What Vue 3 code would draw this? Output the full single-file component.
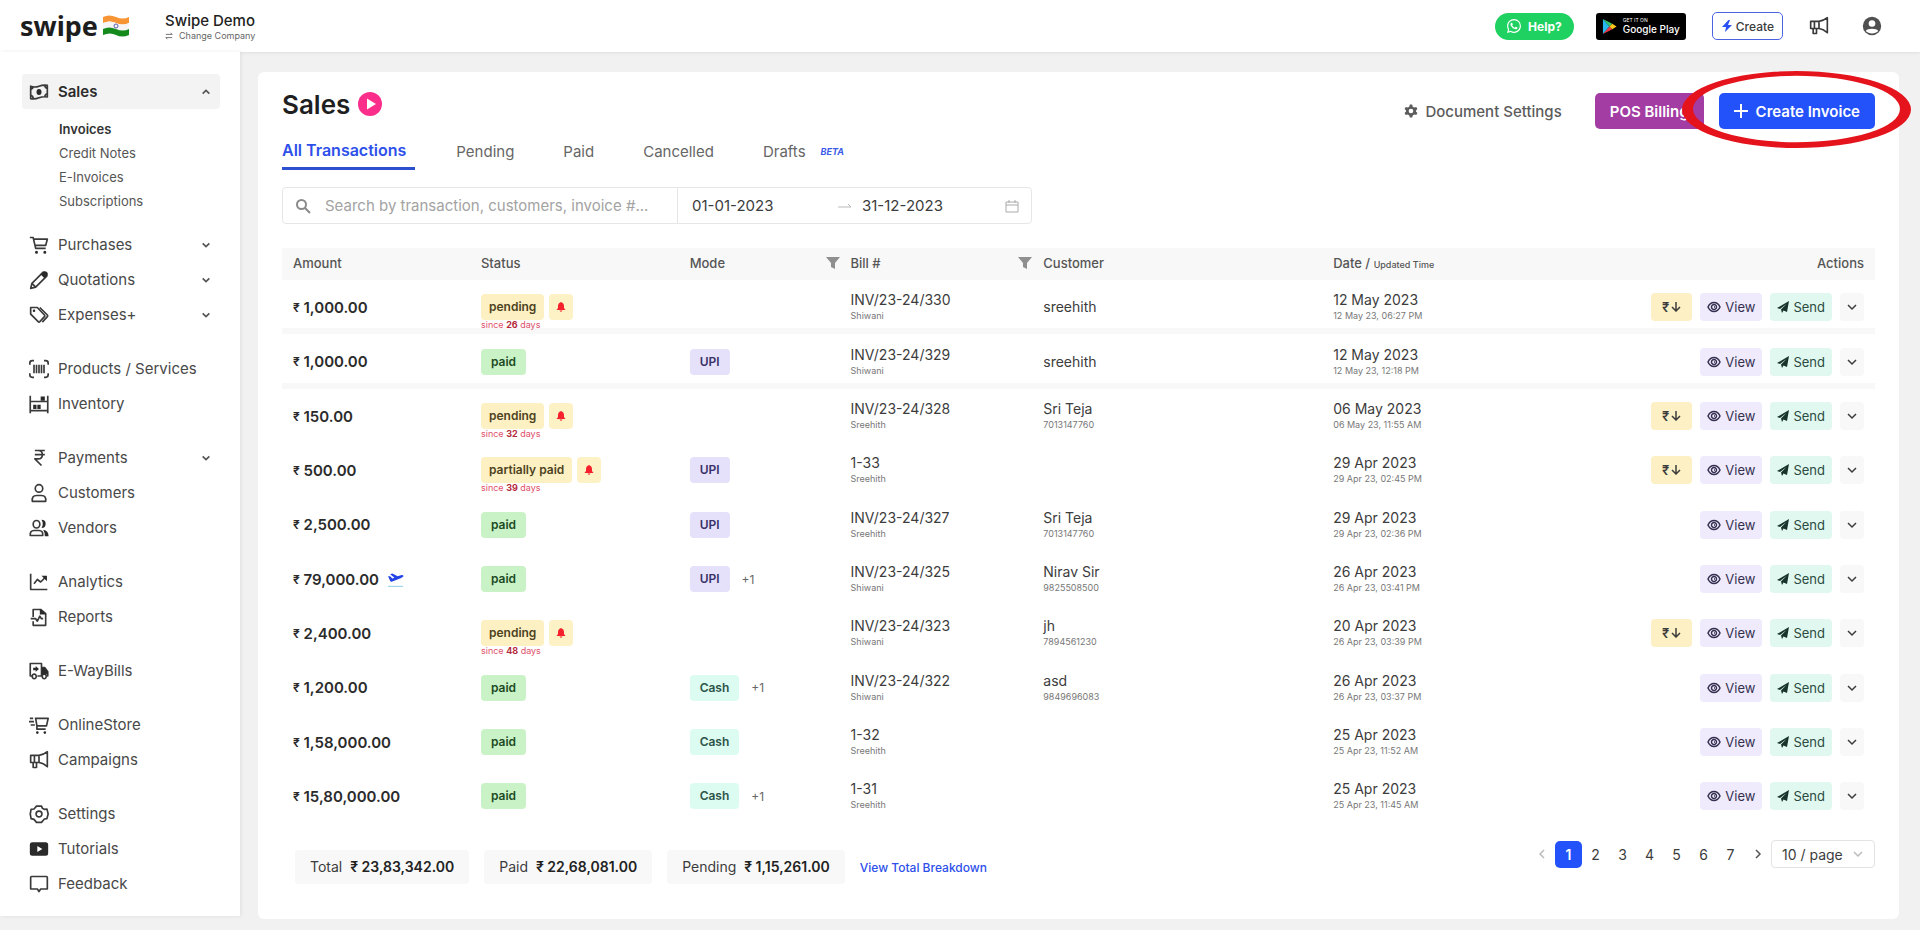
<template>
  <div class="page">
    <header class="topbar">
      <a href="#" class="brand">
        <span class="brand-name">swipe</span>
        <svg class="flag" viewBox="0 0 28 22">
          <path d="M1 2Q7 -1 14 2T27 2V8Q20 11 14 8T1 8Z" fill="#f79433" />
          <path d="M1 8Q7 5 14 8T27 8V14Q20 17 14 14T1 14Z" fill="#f6f4f4" />
          <path d="M1 14Q7 11 14 14T27 14V20Q20 23 14 20T1 20Z" fill="#148a1c" />
          <circle cx="14" cy="11" r="2" fill="none" stroke="#5b5fa8" />
        </svg>
      </a>
      <div class="company">
        <span class="company-name">Swipe Demo</span>
        <a href="#" class="company-change">
          <svg class="swap" viewBox="0 0 10 10">
            <path d="M1 3H9L7 1M9 7H1L3 9" />
          </svg>
          Change Company
        </a>
      </div>
      <div class="top-actions">
        <button class="help">
          <svg class="i14" viewBox="0 0 16 16" fill="#fff">
            <path
              d="M13.6 2.3A7.85 7.85 0 0 0 8 0C3.6 0 .06 3.56.06 7.93c0 1.4.37 2.76 1.06 3.96L0 16l4.2-1.1a7.9 7.9 0 0 0 3.8.96c4.37 0 7.93-3.56 7.93-7.93a7.9 7.9 0 0 0-2.33-5.6zM8 14.5a6.6 6.6 0 0 1-3.36-.92l-.24-.14-2.5.65.67-2.43-.16-.25a6.56 6.56 0 0 1-1-3.5A6.6 6.6 0 0 1 8 1.35a6.6 6.6 0 0 1 6.6 6.6A6.6 6.6 0 0 1 8 14.5z"
            />
            <path
              d="M11.6 9.6c-.2-.1-1.2-.6-1.35-.65-.18-.07-.32-.1-.45.1-.13.2-.5.64-.62.77-.11.14-.23.15-.43.05-1.2-.58-1.97-1.05-2.74-2.37-.2-.35.2-.32.6-1.08.06-.13.03-.25-.02-.35l-.6-1.46c-.17-.38-.33-.33-.46-.33l-.38-.01a.73.73 0 0 0-.53.25c-.18.2-.7.68-.7 1.65s.71 1.9.81 2.04c.1.13 1.4 2.13 3.38 2.99 1.26.54 1.75.58 2.37.5.38-.06 1.17-.48 1.34-.94.16-.47.16-.87.11-.95-.05-.1-.18-.14-.38-.24z"
            />
          </svg>
          Help?
        </button>
        <a href="#" class="play">
          <svg class="play-logo" viewBox="0 0 16 18">
            <path d="M1 1V17L8 9Z" fill="#27b8f0" />
            <path d="M1 1L11 6L8 9Z" fill="#35c26b" />
            <path d="M1 17L11 12L8 9Z" fill="#ee3b48" />
            <path d="M11 6L15.500 9L11 12L8 9Z" fill="#fbc51b" />
          </svg>
          <span class="play-text">
            <small>GET IT ON</small>
            <b>Google Play</b>
          </span>
        </a>
        <button class="quick">
          <svg class="i12" viewBox="0 0 12 12" fill="#2a50f4">
            <path d="M7.500 0L1 7H5L4 12L11 5H7L9 0Z" />
          </svg>
          Create
        </button>
        <button class="plain" aria-label="Announcements">
          <svg class="nav-icon line" viewBox="0 0 24 24">
            <path :d="icons.horn.line" />
          </svg>
        </button>
        <button class="plain" aria-label="Account">
          <svg class="nav-icon" viewBox="0 0 24 24">
            <circle cx="12" cy="12" r="11" fill="#505050" />
            <circle cx="12" cy="9" r="4" fill="#fff" />
            <path d="M4.500 18C6 14.500 18 14.500 19.500 18C16 22 8 22 4.500 18Z" fill="#fff" />
          </svg>
        </button>
      </div>
    </header>

    <div class="body">
      <nav class="sidebar">
        <div v-for="(group, g) in menu" :key="g" class="group">
          <template v-for="item in group" :key="item.label">
            <a href="#" class="item" :class="{ open: item.children }">
              <svg class="nav-icon line" viewBox="0 0 24 24">
                <path v-if="icons[item.icon].line" :d="icons[item.icon].line" />
                <path
                  v-if="icons[item.icon].solid"
                  class="solid"
                  fill-rule="evenodd"
                  :d="icons[item.icon].solid"
                />
              </svg>
              <span class="item-label">{{ item.label }}</span>
              <svg v-if="item.more" class="caret" viewBox="0 0 12 12">
                <path :d="item.children ? 'M2 8L6 4L10 8' : 'M2 4L6 8L10 4'" />
              </svg>
            </a>
            <ul v-if="item.children" class="sub">
              <li v-for="(child, c) in item.children" :key="child">
                <a href="#" :class="{ current: c === 0 }">{{ child }}</a>
              </li>
            </ul>
          </template>
        </div>
      </nav>

      <main class="card">
        <div class="head">
          <div class="title">
            <h1>Sales</h1>
            <button class="plain" aria-label="Watch video">
              <svg class="video" viewBox="0 0 24 24">
                <circle cx="12" cy="12" r="12" fill="#fb2f8b" />
                <path d="M9 6.500L18 12L9 17.500Z" fill="#fff" />
              </svg>
            </button>
          </div>
          <div class="head-actions">
            <a href="#" class="doc-settings">
              <svg class="i14" viewBox="0 0 24 24" fill="#5c5c5c">
                <path fill-rule="evenodd" :d="gear" />
              </svg>
              Document Settings
            </a>
            <button class="btn pos">POS Billing</button>
            <div class="create-wrap">
              <button class="btn create">
                <svg class="i14" viewBox="0 0 14 14">
                  <path d="M7 0V14M0 7H14" stroke="#fff" stroke-width="2" />
                </svg>
                Create Invoice
              </button>
              <svg class="ring" viewBox="0 0 229 77">
                <path
                  fill-rule="evenodd"
                  d="M0 38.500A114.500 38.500 0 1 1 229 38.500A114.500 38.500 0 1 1 0 38.500ZM11 38A103 33 0 1 0 218 38A103 33 0 1 0 11 38Z"
                />
              </svg>
            </div>
          </div>
        </div>

        <div class="tabs">
          <a href="#" class="tab active">All Transactions</a>
          <a href="#" class="tab">Pending</a>
          <a href="#" class="tab">Paid</a>
          <a href="#" class="tab">Cancelled</a>
          <a href="#" class="tab">Drafts <em>BETA</em></a>
        </div>

        <div class="filters">
          <label class="search">
            <svg class="search-icon" viewBox="0 0 16 16">
              <path d="M11 6.500A4.500 4.500 0 1 1 2 6.500A4.500 4.500 0 1 1 11 6.500M10 10L15 15" />
            </svg>
            <input
              type="text"
              aria-label="Search"
              placeholder="Search by transaction, customers, invoice #..."
            />
          </label>
          <div class="range">
            <input type="text" aria-label="Start date" v-model="from" />
            <svg class="arrow" viewBox="0 0 14 8">
              <path d="M0 5H13L10 2" />
            </svg>
            <input type="text" aria-label="End date" v-model="to" />
            <svg class="calendar" viewBox="0 0 14 14">
              <path d="M1 3H13V13H1ZM1 6H13M4 1V4M10 1V4" />
            </svg>
          </div>
        </div>

        <table>
          <thead>
            <tr>
              <th class="c-amount">Amount</th>
              <th class="c-status">Status</th>
              <th class="c-mode">
                <div class="filterable">
                  Mode
                  <svg class="i14" viewBox="0 0 14 12"><path d="M0 0H14L9 6V12L5 10V6Z" /></svg>
                </div>
              </th>
              <th class="c-bill">
                <div class="filterable">
                  Bill #
                  <svg class="i14" viewBox="0 0 14 12"><path d="M0 0H14L9 6V12L5 10V6Z" /></svg>
                </div>
              </th>
              <th class="c-customer">Customer</th>
              <th class="c-date">Date / <small>Updated Time</small></th>
              <th class="c-actions">Actions</th>
            </tr>
          </thead>
          <tbody>
            <tr v-for="row in rows" :key="row.bill">
              <td class="amount">
                <span class="rupee">₹</span> {{ row.amount }}
                <svg v-if="row.export" class="plane" viewBox="0 0 16 14">
                  <path d="M1 3L3 3L5 5L7 4.500L3 1L5 .5L10 3L13 2Q15.500 1.500 15.500 3Q15 4 11 5.500L5 8Q3.500 8.500 3 7.500Z" fill="#2443e6" />
                  <path d="M1 12.500H15" stroke="#8fd0ea" />
                </svg>
              </td>
              <td>
                <div class="status" :class="{ due: row.since }">
                  <div class="badges">
                    <span class="badge" :class="row.since ? 'pending' : 'paid'">{{
                      row.status
                    }}</span>
                    <button v-if="row.since" class="bell" aria-label="Send reminder">
                      <svg class="i10" viewBox="0 0 10 10" fill="#f5222d">
                        <path d="M5 0Q8 1 8 4V6L9.500 8H.5L2 6V4Q2 1 5 0ZM3.500 8.500H6.500Q5 11 3.500 8.500Z" />
                      </svg>
                    </button>
                  </div>
                  <span v-if="row.since" class="since"
                    >since <b>{{ row.since }}</b> days</span
                  >
                </div>
              </td>
              <td>
                <div v-if="row.mode" class="mode">
                  <span class="badge" :class="row.mode.toLowerCase()">{{ row.mode }}</span>
                  <span v-if="row.extra" class="extra">+1</span>
                </div>
              </td>
              <td>
                <div class="main-text">{{ row.bill }}</div>
                <div class="sub-text">{{ row.by }}</div>
              </td>
              <td>
                <div class="main-text">{{ row.customer }}</div>
                <div v-if="row.phone" class="sub-text">{{ row.phone }}</div>
              </td>
              <td>
                <div class="main-text">{{ row.date }}</div>
                <div class="sub-text">{{ row.updated }}</div>
              </td>
              <td>
                <div class="actions">
                  <button v-if="row.since" class="act record" aria-label="Record payment">
                    ₹
                    <svg class="i10" viewBox="0 0 10 10">
                      <path d="M5 0V9M1 5L5 9L9 5" />
                    </svg>
                  </button>
                  <button class="act view">
                    <svg class="i14" viewBox="0 0 14 14">
                      <path d="M1 7Q3 2.500 7 2.500T13 7Q11 11.500 7 11.500T1 7ZM9.500 7A2.500 2.500 0 1 1 4.500 7A2.500 2.500 0 1 1 9.500 7M7 7H8" />
                    </svg>
                    View
                  </button>
                  <button class="act send">
                    <svg class="i12" viewBox="0 0 12 12" fill="#17332b">
                      <path d="M12 0L10 11L6.500 9.500L5 12L4 8.500L9.500 3L3 8L0 7Z" />
                    </svg>
                    Send
                  </button>
                  <button class="act more" aria-label="More actions">
                    <svg class="i10" viewBox="0 0 10 10">
                      <path d="M1 3L5 7L9 3" />
                    </svg>
                  </button>
                </div>
              </td>
            </tr>
          </tbody>
        </table>

        <footer class="foot">
          <div class="totals">
            <div v-for="t in totals" :key="t.label" class="total">
              {{ t.label }} <b>₹ {{ t.value }}</b>
            </div>
            <a href="#" class="breakdown">View Total Breakdown</a>
          </div>
          <div class="pager">
            <button class="step" aria-label="Previous page" disabled>
              <svg class="i10" viewBox="0 0 10 10"><path d="M7 1L3 5L7 9" /></svg>
            </button>
            <button
              v-for="n in 7"
              :key="n"
              class="num"
              :class="{ on: n === page }"
              @click="page = n"
            >
              {{ n }}
            </button>
            <button class="step" aria-label="Next page">
              <svg class="i10" viewBox="0 0 10 10"><path d="M3 1L7 5L3 9" /></svg>
            </button>
            <div class="size">
              <select aria-label="Page size">
                <option>10 / page</option>
                <option>20 / page</option>
                <option>50 / page</option>
              </select>
              <svg class="i10" viewBox="0 0 10 10"><path d="M1 3L5 7L9 3" /></svg>
            </div>
          </div>
        </footer>
      </main>
    </div>
  </div>
</template>

<script setup>
import { ref } from "vue";

const from = ref("01-01-2023");
const to = ref("31-12-2023");
const page = ref(1);

const gear =
  "M10 1H14L15 4.500L17.500 6L21 5L23 8.500L20.500 11V13L23 15.500L21 19L17.500 18L15 19.500L14 23H10L9 19.500L6.500 18L3 19L1 15.500L3.500 13V11L1 8.500L3 5L6.500 6L9 4.500ZM12 8A4 4 0 1 0 12 16A4 4 0 1 0 12 8Z";

const icons = {
  money: {
    line: "M2 5Q7 7 12 5T22 4V18Q17 17 12 19T2 20ZM2 9Q5 8 5 5.500M22 8Q19 7 19 4M2 16Q5 17 5 19.500M22 14Q19 15 19 17.500",
    solid: "M12 8.500A3 3.500 0 1 0 12 15.500A3 3.500 0 1 0 12 8.500Z",
  },
  cart: {
    line: "M1 3H5L8 16H20M5.500 5H22L20 12.500H7",
    solid: "M9 19A1.800 1.800 0 1 0 9 22.600A1.800 1.800 0 1 0 9 19ZM19 19A1.800 1.800 0 1 0 19 22.600A1.800 1.800 0 1 0 19 19Z",
  },
  pencil: {
    line: "M2 22L3.500 16L17 2.500L21.500 7L8 20.500ZM3.500 16L8 20.500",
    solid: "M14 5.500L18 1.500Q20 1 21.500 2.500T22.500 6L18.500 10Z",
  },
  tags: {
    line: "M2 3H10L18.500 12Q19.500 13 18.500 14L13 20Q12 21 11 20L2 11ZM13 3L22 12Q23 13 22 14L16 20.500",
    solid: "M6 5.500A1.500 1.500 0 1 0 6 8.500A1.500 1.500 0 1 0 6 5.500Z",
  },
  barcode: {
    line: "M6 2H4Q1 2 1 5V7M18 2H20Q23 2 23 5V7M6 22H4Q1 22 1 19V17M18 22H20Q23 22 23 19V17M6 7V17M9 7V17M12 7V17M15 7V17M18 7V17",
  },
  shelf: {
    line: "M1.500 2V23M22.500 2V23M1.500 9H22.500M1.500 20H22.500",
    solid: "M14 3H19V8H14ZM5 13H9V18H5ZM10 13H14V18H10Z",
  },
  rupee: {
    line: "M7 3H19M7 8H19M7 3H11Q16 3 16 8T11 13H7L15 21",
  },
  user: {
    line: "M12 2A4.500 4.500 0 1 0 12 11A4.500 4.500 0 1 0 12 2ZM4 22Q3 15 9 15H15Q21 15 20 22Z",
  },
  users: {
    line: "M9 3A4 4.500 0 1 0 9 12A4 4.500 0 1 0 9 3ZM1.500 21Q1 15 6 15H12Q17 15 16.500 21Z",
    solid: "M15 2Q20 2 20 7T15 12Q18 7 15 2ZM17 14Q23.500 15 23.500 22H19Q19 17 17 14Z",
  },
  chart: {
    line: "M2 2V21H22M6 14L10 9L14 12L20 6",
    solid: "M15 4.500H21.500V11Z",
  },
  report: {
    line: "M5 12V3H14L20 8V22H5V17M2 14H8L10 17L13 11L15 14H17",
    solid: "M13 2L21 9H13Z",
  },
  truck: {
    line: "M4 18H1.500V3H15V18H10M8.500 18.500A2.300 2.300 0 1 1 4 18.500A2.300 2.300 0 1 1 8.500 18.500M20.500 18.500A2.300 2.300 0 1 1 16 18.500A2.300 2.300 0 1 1 20.500 18.500M15 8H19L22.500 13V18H21",
    solid: "M5 8H8V6L12 9.500L8 13V11H5ZM15 8H19L22.500 13V16H15Z",
  },
  fastcart: {
    line: "M7 4H23L21 13H9.500L8 4M9.500 13V17H20M1 4H5M0 8H6M2 12H7",
    solid: "M10 19.500A1.600 1.600 0 1 0 10 22.700A1.600 1.600 0 1 0 10 19.500ZM19 19.500A1.600 1.600 0 1 0 19 22.700A1.600 1.600 0 1 0 19 19.500Z",
  },
  horn: {
    line: "M2 6.500H12Q17 6 22 2V20Q17 15.500 12 15H2ZM12 6.500V15M5 15V21H9V15M6.500 6.500V15",
  },
  gearline: {
    line: "M9 2.500H15L16 5L19 6.500L21.500 6L23 12L21.500 17.500L18.500 18L15 22H9L6 18.500L2.500 17.500L1.500 12L2.500 6.500L6 6ZM12 8.500A3.500 3.500 0 1 0 12 15.500A3.500 3.500 0 1 0 12 8.500Z",
  },
  youtube: {
    solid: "M4 4H20Q23 4 23 7V17Q23 20 20 20H4Q1 20 1 17V7Q1 4 4 4ZM10 8.500V15.500L16 12Z",
  },
  chat: {
    line: "M3 3H21Q22 3 22 4V18H14L12 21L10 18H2V4Q2 3 3 3Z",
  },
};

const menu = [
  [
    {
      label: "Sales",
      icon: "money",
      more: true,
      children: ["Invoices", "Credit Notes", "E-Invoices", "Subscriptions"],
    },
    { label: "Purchases", icon: "cart", more: true },
    { label: "Quotations", icon: "pencil", more: true },
    { label: "Expenses+", icon: "tags", more: true },
  ],
  [
    { label: "Products / Services", icon: "barcode" },
    { label: "Inventory", icon: "shelf" },
  ],
  [
    { label: "Payments", icon: "rupee", more: true },
    { label: "Customers", icon: "user" },
    { label: "Vendors", icon: "users" },
  ],
  [
    { label: "Analytics", icon: "chart" },
    { label: "Reports", icon: "report" },
  ],
  [{ label: "E-WayBills", icon: "truck" }],
  [
    { label: "OnlineStore", icon: "fastcart" },
    { label: "Campaigns", icon: "horn" },
  ],
  [
    { label: "Settings", icon: "gearline" },
    { label: "Tutorials", icon: "youtube" },
    { label: "Feedback", icon: "chat" },
  ],
];

const rows = [
  { amount: "1,000.00", status: "pending", since: 26, bill: "INV/23-24/330", by: "Shiwani", customer: "sreehith", date: "12 May 2023", updated: "12 May 23, 06:27 PM" },
  { amount: "1,000.00", status: "paid", mode: "UPI", bill: "INV/23-24/329", by: "Shiwani", customer: "sreehith", date: "12 May 2023", updated: "12 May 23, 12:18 PM" },
  { amount: "150.00", status: "pending", since: 32, bill: "INV/23-24/328", by: "Sreehith", customer: "Sri Teja", phone: "7013147760", date: "06 May 2023", updated: "06 May 23, 11:55 AM" },
  { amount: "500.00", status: "partially paid", since: 39, mode: "UPI", bill: "1-33", by: "Sreehith", date: "29 Apr 2023", updated: "29 Apr 23, 02:45 PM" },
  { amount: "2,500.00", status: "paid", mode: "UPI", bill: "INV/23-24/327", by: "Sreehith", customer: "Sri Teja", phone: "7013147760", date: "29 Apr 2023", updated: "29 Apr 23, 02:36 PM" },
  { amount: "79,000.00", export: true, status: "paid", mode: "UPI", extra: true, bill: "INV/23-24/325", by: "Shiwani", customer: "Nirav Sir", phone: "9825508500", date: "26 Apr 2023", updated: "26 Apr 23, 03:41 PM" },
  { amount: "2,400.00", status: "pending", since: 48, bill: "INV/23-24/323", by: "Shiwani", customer: "jh", phone: "7894561230", date: "20 Apr 2023", updated: "26 Apr 23, 03:39 PM" },
  { amount: "1,200.00", status: "paid", mode: "Cash", extra: true, bill: "INV/23-24/322", by: "Shiwani", customer: "asd", phone: "9849696083", date: "26 Apr 2023", updated: "26 Apr 23, 03:37 PM" },
  { amount: "1,58,000.00", status: "paid", mode: "Cash", bill: "1-32", by: "Sreehith", date: "25 Apr 2023", updated: "25 Apr 23, 11:52 AM" },
  { amount: "15,80,000.00", status: "paid", mode: "Cash", extra: true, bill: "1-31", by: "Sreehith", date: "25 Apr 2023", updated: "25 Apr 23, 11:45 AM" },
];

const totals = [
  { label: "Total", value: "23,83,342.00" },
  { label: "Paid", value: "22,68,081.00" },
  { label: "Pending", value: "1,15,261.00" },
];
</script>

<style>
body {
  margin: 0;
  background: #f1f1f1;
}
</style>

<style scoped>
.page {
  min-height: 100vh;
  display: flex;
  flex-direction: column;
  font-family: Inter, "Liberation Sans", sans-serif;
  font-size: 15px;
  color: #3c3c3c;
}
.page * {
  box-sizing: border-box;
}
a {
  color: inherit;
  text-decoration: none;
}
button,
input,
select {
  font: inherit;
  color: inherit;
  border: 0;
  background: none;
  padding: 0;
  outline: none;
}
svg {
  display: block;
  flex: none;
}
.i10 {
  width: 10px;
  height: 10px;
}
.i12 {
  width: 12px;
  height: 12px;
}
.i14 {
  width: 14px;
  height: 14px;
}
.plain {
  display: flex;
}

/* top bar */
.topbar {
  height: 52px;
  display: flex;
  align-items: center;
  padding: 0 38px 0 20px;
  background: #fff;
  box-shadow: 0 1px 3px rgba(0, 0, 0, 0.08);
}
.brand {
  display: flex;
  align-items: center;
  gap: 4px;
  width: 145px;
}
.brand-name {
  font-family: "Noto Sans", sans-serif;
  font-weight: 700;
  font-size: 27px;
  line-height: 40px;
  color: #1d1d1d;
}
.flag {
  width: 28px;
  height: 22px;
}
.company {
  display: flex;
  flex-direction: column;
  padding-top: 2px;
}
.company-name {
  font-weight: 500;
  font-size: 15px;
  line-height: 18px;
  color: #222;
}
.company-change {
  display: flex;
  align-items: center;
  gap: 6px;
  font-size: 9px;
  line-height: 12px;
  color: #666;
}
.swap {
  width: 8px;
  height: 8px;
  fill: none;
  stroke: #555;
}
.top-actions {
  margin-left: auto;
  display: flex;
  align-items: center;
}
.help {
  display: flex;
  align-items: center;
  gap: 7px;
  height: 27px;
  padding: 0 12px;
  border-radius: 14px;
  background: #1fd161;
  color: #fff;
  font-weight: 700;
  font-size: 12px;
}
.play {
  display: flex;
  align-items: center;
  gap: 6px;
  height: 27px;
  padding: 0 6px;
  margin: 0 26px 0 22px;
  border-radius: 3px;
  background: #000;
  color: #fff;
}
.play-logo {
  width: 15px;
  height: 17px;
}
.play-text {
  display: flex;
  flex-direction: column;
}
.play-text small {
  font-size: 5px;
  line-height: 6px;
}
.play-text b {
  font-weight: 500;
  font-size: 10px;
  line-height: 13px;
}
.quick {
  display: flex;
  align-items: center;
  gap: 3px;
  height: 28px;
  padding: 0 8px;
  margin-right: 26px;
  border: 1px solid #4a63e0;
  border-radius: 5px;
  font-weight: 500;
  font-size: 12px;
}
.quick ~ .plain + .plain {
  margin-left: 33px;
}
.nav-icon {
  width: 20px;
  height: 20px;
}
.line {
  fill: none;
  stroke: #3a3a3a;
  stroke-width: 2;
  stroke-linejoin: round;
}
.line .solid {
  fill: #2a2a2a;
  stroke: none;
}

/* sidebar */
.body {
  flex: 1;
  display: flex;
}
.sidebar {
  flex: none;
  width: 240px;
  display: flex;
  flex-direction: column;
  gap: 19px;
  padding: 22px 20px 15px 22px;
  margin-bottom: 14px;
  background: #fff;
  box-shadow: 1px 0 4px rgba(0, 0, 0, 0.08);
}
.item {
  display: flex;
  align-items: center;
  gap: 9px;
  height: 35px;
  padding: 0 9px 0 7px;
  color: #484848;
}
.item.open {
  background: #f3f3f3;
  border-radius: 4px;
  font-weight: 600;
  color: #2c2c2c;
}
.item-label {
  flex: 1;
}
.caret {
  width: 10px;
  height: 10px;
  fill: none;
  stroke: #555;
  stroke-width: 2;
}
.sub {
  list-style: none;
  margin: 0;
  padding: 8px 0 14px 37px;
  font-size: 13px;
  line-height: 24px;
  color: #555;
}
.sub .current {
  font-weight: 600;
  color: #333;
}

/* content */
.card {
  flex: 1;
  min-width: 0;
  margin: 20px 21px 11px 18px;
  padding: 14px 24px 20px;
  border-radius: 6px;
  background: #fff;
}
.head {
  display: flex;
  justify-content: space-between;
}
.title {
  display: flex;
  align-items: center;
  gap: 8px;
  height: 36px;
}
h1 {
  margin: 0;
  font-weight: 600;
  font-size: 26px;
  color: #1f1f1f;
}
.video {
  width: 24px;
  height: 24px;
}
.head-actions {
  display: flex;
  align-items: center;
  padding-top: 7px;
}
.doc-settings {
  display: flex;
  align-items: center;
  gap: 7px;
  margin-right: 33px;
  font-weight: 500;
  color: #5c5c5c;
}
.btn {
  display: flex;
  align-items: center;
  gap: 8px;
  height: 36px;
  padding: 0 15px;
  border-radius: 5px;
  font-weight: 600;
  color: #fff;
}
.pos {
  margin-right: 15px;
  background: #a33ca3;
}
.create-wrap {
  position: relative;
}
.create {
  background: #2352fa;
}
.ring {
  position: absolute;
  left: -37px;
  top: -22px;
  width: 229px;
  height: 77px;
  fill: #e5141c;
  pointer-events: none;
}
.tabs {
  display: flex;
  align-items: center;
  gap: 49px;
  height: 41px;
  color: #666;
}
.tab {
  display: flex;
  align-items: center;
  gap: 15px;
  height: 41px;
  padding-top: 4px;
}
.tab.active {
  padding-right: 9px;
  margin-right: -8px;
  border-bottom: 3px solid #2c4fd0;
  font-weight: 600;
  font-size: 16px;
  color: #2d50ea;
}
.tab em {
  font-weight: 700;
  font-size: 9px;
  color: #3b5be8;
}
.filters {
  display: flex;
  width: 750px;
  height: 37px;
  margin: 17px 0 24px;
  border: 1px solid #e6e6e6;
  border-radius: 4px;
}
.search {
  display: flex;
  align-items: center;
  flex: 1;
  gap: 14px;
  padding-left: 12px;
  border-right: 1px solid #e6e6e6;
}
.search input {
  flex: 1;
  min-width: 0;
}
.search input::placeholder {
  color: #a3a3a3;
}
.search-icon {
  width: 16px;
  height: 16px;
  fill: none;
  stroke: #8a8a8a;
  stroke-width: 2;
}
.range {
  display: flex;
  align-items: center;
  width: 353px;
  padding: 0 12px 0 14px;
}
.range input {
  flex: 1;
  min-width: 0;
}
.arrow {
  width: 14px;
  height: 8px;
  margin: 0 10px 0 3px;
  fill: none;
  stroke: #bbb;
}
.calendar {
  width: 14px;
  height: 14px;
  fill: none;
  stroke: #aaa;
}

/* table */
table {
  width: 100%;
  table-layout: fixed;
  border-collapse: collapse;
}
th {
  height: 32px;
  padding: 0 0 3px 11px;
  background: #f8f8f8;
  font-weight: 500;
  font-size: 13px;
  text-align: left;
  color: #555;
}
th small {
  font-size: 9px;
}
td {
  height: 54px;
  padding: 0 0 0 11px;
}
tr:nth-child(3n + 2) td {
  height: 55px;
}
tr:nth-child(-n + 2) td {
  box-shadow: inset 0 -6px 0 #f8f8f8;
}
.c-amount {
  width: 11.8%;
}
.c-status {
  width: 13.1%;
}
.c-mode {
  width: 10.1%;
}
.c-bill {
  width: 12.1%;
}
.c-customer {
  width: 18.2%;
}
.c-date {
  width: 15%;
}
.c-actions {
  padding-right: 11px;
  text-align: right;
}
.filterable {
  display: flex;
  align-items: center;
  justify-content: space-between;
}
.filterable svg {
  fill: #8f8f8f;
}
.amount {
  font-weight: 600;
  color: #2b2b2b;
}
.rupee {
  font-size: 12px;
  vertical-align: 1px;
}
.plane {
  display: inline-block;
  width: 17px;
  height: 15px;
  margin-left: 4px;
  vertical-align: middle;
}
.status,
.mode {
  display: flex;
  flex-direction: column;
  font-size: 13px;
}
.status.due {
  padding-top: 10px;
}
.mode {
  flex-direction: row;
  align-items: center;
  gap: 12px;
}
.badges {
  display: flex;
  gap: 5px;
}
.badge {
  padding: 0 10px;
  border-radius: 4px;
  font-weight: 600;
  font-size: 12px;
  line-height: 26px;
}
.pending.badge {
  padding: 0 8px;
  background: #fdf0c2;
  color: #4d431f;
}
.paid.badge {
  background: #c9f3c7;
  color: #1d4a24;
}
.paid.badge,
.upi,
.cash {
  align-self: flex-start;
}
.upi {
  background: #e6e1fb;
  color: #393067;
}
.cash {
  background: #dcfbf1;
  color: #2d5449;
}
.extra {
  font-size: 12px;
  color: #666;
}
.bell {
  display: flex;
  align-items: center;
  justify-content: center;
  width: 24px;
  height: 26px;
  border-radius: 4px;
  background: #fdf2c6;
}
.since {
  font-size: 9px;
  line-height: 10px;
  color: #e0506a;
}
.since b {
  font-weight: 700;
  color: #b52a3c;
}
.main-text {
  font-size: 14px;
  line-height: 18px;
}
.sub-text {
  font-size: 9px;
  line-height: 14px;
  color: #777;
}
.actions {
  display: flex;
  justify-content: flex-end;
  gap: 8px;
  padding-right: 11px;
}
.act {
  display: flex;
  align-items: center;
  justify-content: center;
  gap: 4px;
  height: 28px;
  padding: 0 7px;
  border-radius: 4px;
  font-size: 13px;
}
.act svg {
  stroke: currentColor;
}
.act:not(.send) svg {
  fill: none;
  stroke-width: 1.500;
}
.act.send svg {
  stroke: none;
}
.record {
  gap: 2px;
  padding: 0 11px;
  background: #fdf0c4;
  font-weight: 600;
}
.view {
  background: #efebfd;
  color: #35304f;
}
.send {
  background: #e0f8ef;
  color: #2b4a41;
}
.more {
  width: 24px;
  background: #f8f8f8;
}

/* footer */
.foot {
  display: flex;
  justify-content: space-between;
  align-items: flex-start;
  padding: 17px 0 0 13px;
}
.totals {
  display: flex;
  align-items: center;
  gap: 15px;
  padding-top: 10px;
}
.total {
  padding: 0 15px;
  border-radius: 4px;
  background: #f8f8f8;
  font-size: 14px;
  line-height: 34px;
}
.total b {
  margin-left: 4px;
  font-weight: 600;
  color: #222;
}
.breakdown {
  font-weight: 500;
  font-size: 12px;
  color: #2d50ea;
}
.pager {
  display: flex;
  align-items: center;
  font-size: 14px;
}
.pager svg {
  fill: none;
  stroke: #555;
  stroke-width: 1.500;
}
.step,
.num {
  width: 27px;
  height: 27px;
  display: flex;
  align-items: center;
  justify-content: center;
}
.step:disabled svg {
  stroke: #bbb;
}
.num.on {
  border-radius: 5px;
  background: #2352fa;
  color: #fff;
  font-weight: 600;
}
.size {
  position: relative;
}
.size select {
  appearance: none;
  height: 28px;
  width: 104px;
  padding-left: 10px;
  border: 1px solid #e3e3e3;
  border-radius: 4px;
}
.size svg {
  position: absolute;
  right: 12px;
  top: 9px;
  stroke: #bbb;
  pointer-events: none;
}
</style>
